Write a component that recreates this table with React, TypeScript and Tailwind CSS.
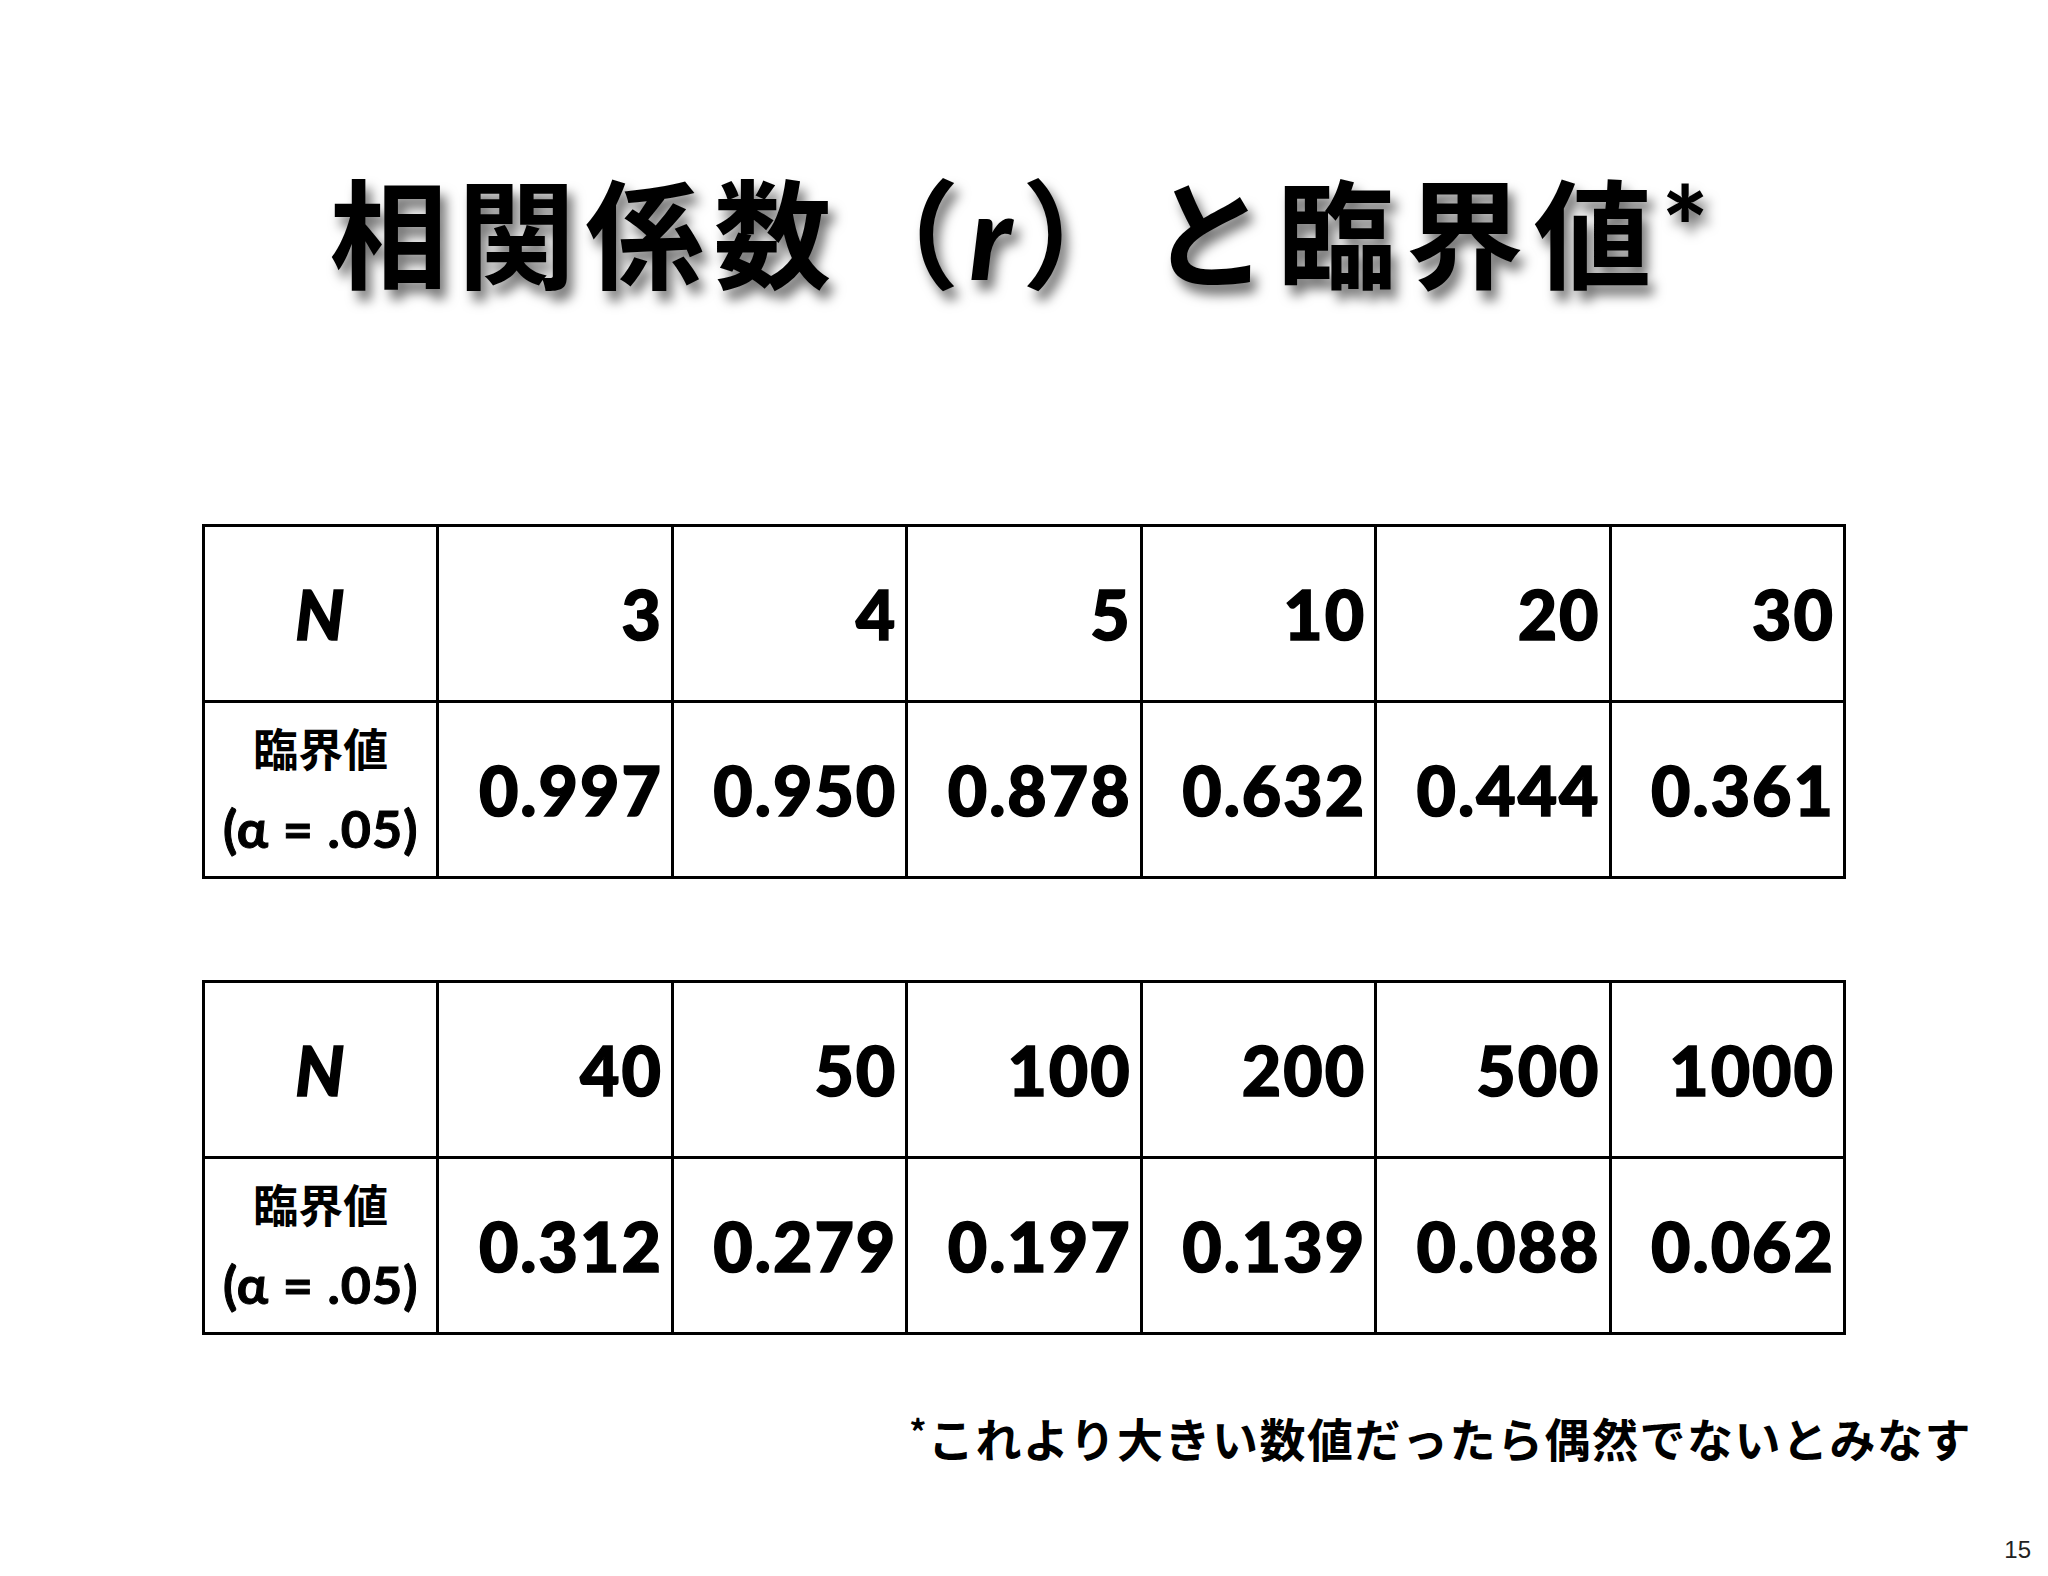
const row1 = {
  n: ["3", "4", "5", "10", "20", "30"],
  r: ["0.997", "0.950", "0.878", "0.632", "0.444", "0.361"],
};
const row2 = {
  n: ["40", "50", "100", "200", "500", "1000"],
  r: ["0.312", "0.279", "0.197", "0.139", "0.088", "0.062"],
};

const jp = "font-['Noto_Sans_CJK_JP',sans-serif]";
const num = "font-['Lato','Noto_Sans',sans-serif]";
const big = `${num} text-[68px] font-black leading-none text-black tracking-[2px] [-webkit-text-stroke:1.5px_black]`;

function CriticalTable({ n, r }: { n: string[]; r: string[] }) {
  return (
    <div className="mx-auto w-[1644px] grid grid-cols-7 border-l-[3px] border-t-[3px] border-black">
      <div className="h-[176px] border-r-[3px] border-b-[3px] border-black flex items-center justify-center">
        <span className={`${big} italic`}>N</span>
      </div>
      {n.map((v) => (
        <div
          key={v}
          className="h-[176px] border-r-[3px] border-b-[3px] border-black flex items-center justify-end pr-[8px]"
        >
          <span className={big}>{v}</span>
        </div>
      ))}
      <div className="h-[176px] border-r-[3px] border-b-[3px] border-black flex flex-col items-center justify-center gap-[32px]">
        <span className={`${jp} text-[45px] font-bold leading-none text-black`}>臨界値</span>
        <span className={`${num} text-[52px] font-bold leading-none tracking-[1px] text-black [-webkit-text-stroke:1px_black]`}>
          (α = .05)
        </span>
      </div>
      {r.map((v) => (
        <div
          key={v}
          className="h-[176px] border-r-[3px] border-b-[3px] border-black flex items-center justify-end pr-[8px]"
        >
          <span className={big}>{v}</span>
        </div>
      ))}
    </div>
  );
}

export default function App() {
  return (
    <div className="relative w-[2048px] h-[1576px] bg-white flex flex-col">
      {/* title */}
      <h1
        className={`${jp} mt-[170px] h-[118px] text-center text-[118px] font-bold leading-none tracking-[10px] text-black [text-shadow:6px_10px_12px_rgba(0,0,0,0.55)]`}
      >
        相関係数（<span className={`${num} italic font-black`}>r</span>）と臨界値
        <span className={`${num} font-black align-top leading-none text-[110px]`}>*</span>
      </h1>

      <div className="mt-[236px]">
        <CriticalTable n={row1.n} r={row1.r} />
      </div>
      <div className="mt-[101px]">
        <CriticalTable n={row2.n} r={row2.r} />
      </div>

      <p className={`${jp} mt-[79px] mr-[76px] self-end text-[46px] font-bold leading-none tracking-[1.5px] text-black`}>
        <span className="align-top text-[34px]">*</span>これより大きい数値だったら偶然でないとみなす
      </p>

      <span className="absolute right-[17px] bottom-[8px] font-['Liberation_Sans',sans-serif] text-[24px] text-[#222]">
        15
      </span>
    </div>
  );
}
